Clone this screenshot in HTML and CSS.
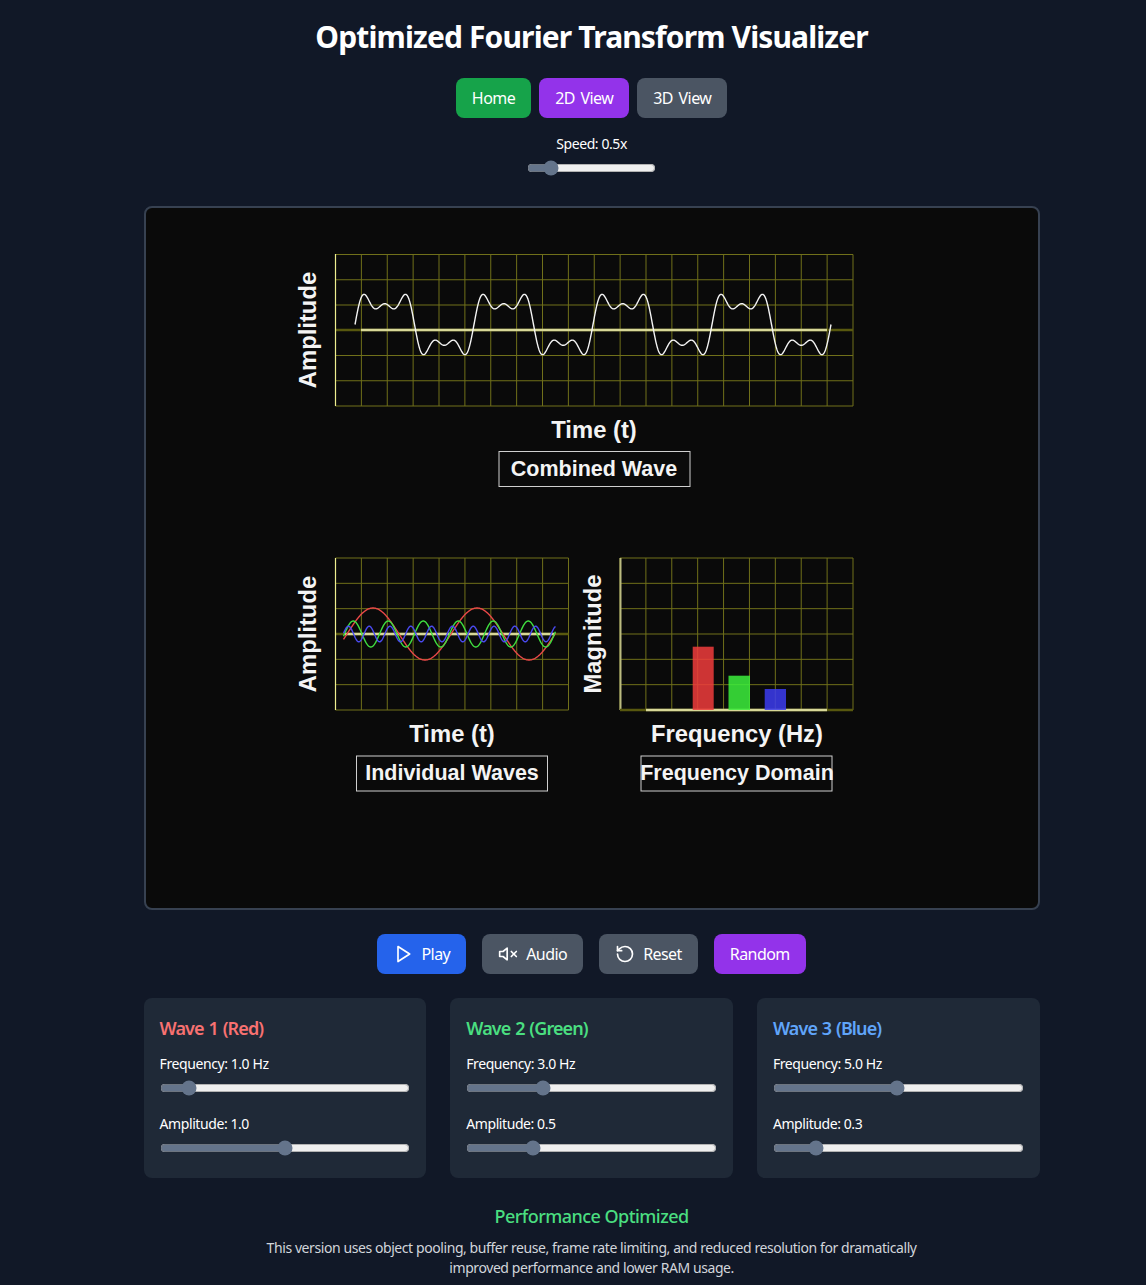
FILE: index.html
```html
<!DOCTYPE html>
<html lang="en">
<head>
    <meta charset="UTF-8">
    <meta name="viewport" content="width=device-width, initial-scale=1.0">
    <title>Optimized Fourier Transform Visualizer</title>
    <link rel="stylesheet" href="styles.css">
</head>
<body>
    <div class="app">
        <h1 class="title">Optimized Fourier Transform Visualizer</h1>

        <!-- Page nav -->
        <div class="button-row nav-row">
            <button class="btn btn-green">Home</button>
            <button class="btn btn-purple">2D View</button>
            <button class="btn btn-gray">3D View</button>
        </div>

        <div class="speed">
            <label>Speed: 0.5x</label>
            <input class="speed-slider" type="range" min="0.1" max="3" step="0.1" value="0.5">
        </div>

        <!-- Plots -->
        <div class="stage">
            <svg class="stage-svg" viewBox="146 208 892 700" width="892" height="700">
                <g id="plots"></g>

                <text class="axis-label" text-anchor="middle" transform="translate(316 330) rotate(-90)">Amplitude</text>
                <text class="axis-label" text-anchor="middle" x="594" y="438">Time (t)</text>
                <rect class="title-box" x="499" y="451.5" width="191" height="35"></rect>
                <text class="plot-title" text-anchor="middle" x="594" y="476">Combined Wave</text>

                <text class="axis-label" text-anchor="middle" transform="translate(316 634) rotate(-90)">Amplitude</text>
                <text class="axis-label" text-anchor="middle" x="452" y="742">Time (t)</text>
                <rect class="title-box" x="356.5" y="756" width="191" height="35"></rect>
                <text class="plot-title" text-anchor="middle" x="452" y="780">Individual Waves</text>

                <text class="axis-label" text-anchor="middle" transform="translate(601 634) rotate(-90)">Magnitude</text>
                <text class="axis-label" text-anchor="middle" x="737" y="742">Frequency (Hz)</text>
                <rect class="title-box" x="641" y="756" width="191" height="35"></rect>
                <text class="plot-title" text-anchor="middle" x="737" y="780">Frequency Domain</text>
            </svg>
        </div>

        <!-- Playback controls -->
        <div class="button-row action-row">
            <button class="btn btn-blue">
                <svg class="icon" viewBox="0 0 24 24"><polygon points="6 3 20 12 6 21 6 3"></polygon></svg>
                Play
            </button>
            <button class="btn btn-gray">
                <svg class="icon" viewBox="0 0 24 24"><path d="M11 5 6 9H2v6h4l5 4z"></path><line x1="22" y1="9" x2="16" y2="15"></line><line x1="16" y1="9" x2="22" y2="15"></line></svg>
                Audio
            </button>
            <button class="btn btn-gray">
                <svg class="icon" viewBox="0 0 24 24"><path d="M3 12a9 9 0 1 0 9-9 9.75 9.75 0 0 0-6.74 2.74L3 8"></path><path d="M3 3v5h5"></path></svg>
                Reset
            </button>
            <button class="btn btn-purple">Random</button>
        </div>

        <!-- Wave settings -->
        <div class="wave-grid">
            <div class="wave-card">
                <h3 class="wave-title red">Wave 1 (Red)</h3>
                <label class="control-label">Frequency: 1.0 Hz</label>
                <input class="slider" type="range" min="0.1" max="10" step="0.1" value="1">
                <label class="control-label">Amplitude: 1.0</label>
                <input class="slider" type="range" min="0" max="2" step="0.1" value="1">
            </div>
            <div class="wave-card">
                <h3 class="wave-title green">Wave 2 (Green)</h3>
                <label class="control-label">Frequency: 3.0 Hz</label>
                <input class="slider" type="range" min="0.1" max="10" step="0.1" value="3">
                <label class="control-label">Amplitude: 0.5</label>
                <input class="slider" type="range" min="0" max="2" step="0.1" value="0.5">
            </div>
            <div class="wave-card">
                <h3 class="wave-title blue">Wave 3 (Blue)</h3>
                <label class="control-label">Frequency: 5.0 Hz</label>
                <input class="slider" type="range" min="0.1" max="10" step="0.1" value="5">
                <label class="control-label">Amplitude: 0.3</label>
                <input class="slider" type="range" min="0" max="2" step="0.1" value="0.3">
            </div>
        </div>

        <div class="footer">
            <h3 class="footer-title">Performance Optimized</h3>
            <p class="footer-text">This version uses object pooling, buffer reuse, frame rate limiting, and reduced resolution for dramatically improved performance and lower RAM usage.</p>
        </div>
    </div>

    <script src="script.js"></script>
</body>
</html>
```

FILE: styles.css
```css
* {
    margin: 0;
    padding: 0;
    box-sizing: border-box;
}

body {
    font-family: "Noto Sans", sans-serif;
    background-color: #111827;
    color: white;
}

.app {
    width: 896px;
    margin-left: 143.6px;
    padding-top: 19px;
}

.title {
    font-size: 30px;
    line-height: 36px;
    font-weight: 700;
    letter-spacing: -0.029em;
    text-align: center;
    margin-bottom: 23px;
}

/* Buttons */
.button-row {
    display: flex;
    justify-content: center;
}

.nav-row {
    gap: 8px;
    margin-bottom: 16px;
}

.action-row {
    gap: 16px;
    margin-bottom: 24px;
}

.btn {
    display: flex;
    align-items: center;
    gap: 8px;
    height: 40px;
    padding: 0 16px;
    border: none;
    border-radius: 8px;
    color: white;
    font-family: inherit;
    font-size: 16px;
    letter-spacing: -0.035em;
    word-spacing: 2px;
}

.btn-green { background-color: #16a34a; }
.btn-purple { background-color: #9333ea; }
.btn-gray { background-color: #4b5563; }
.btn-blue { background-color: #2563eb; }

.icon {
    width: 20px;
    height: 20px;
    fill: none;
    stroke: white;
    stroke-width: 2;
    stroke-linecap: round;
    stroke-linejoin: round;
}

/* Speed */
.speed {
    display: flex;
    flex-direction: column;
    align-items: center;
    gap: 6px;
    font-size: 14px;
    line-height: 20px;
    letter-spacing: -0.03em;
    margin-bottom: 30px;
}

.speed-slider {
    display: block;
    width: 129px;
    height: 16px;
    accent-color: #64748b;
}

/* Canvas area */
.stage {
    height: 704px;
    border: 2px solid #374151;
    border-radius: 8px;
    background-color: #0a0a0a;
    overflow: hidden;
    margin-bottom: 24px;
}

.stage-svg {
    display: block;
}

.axis-label {
    font-family: "Liberation Sans", sans-serif;
    font-size: 23.8px;
    font-weight: 700;
    fill: #f4f4f4;
}

.plot-title {
    font-family: "Liberation Sans", sans-serif;
    font-size: 21.5px;
    font-weight: 700;
    fill: #f4f4f4;
}

.title-box {
    fill: none;
    stroke: #cfcfcf;
    stroke-width: 1;
}

/* Wave cards */
.wave-grid {
    display: grid;
    grid-template-columns: repeat(3, 1fr);
    gap: 24px;
    margin-bottom: 24px;
}

.wave-card {
    background-color: #1f2937;
    border-radius: 8px;
    padding: 16px 16px 22px;
}

.wave-title {
    font-size: 18px;
    line-height: 28px;
    font-weight: 600;
    letter-spacing: -0.05em;
    word-spacing: 1px;
    margin-bottom: 12px;
}

.red { color: #f87171; }
.green { color: #4ade80; }
.blue { color: #60a5fa; }

.control-label {
    display: block;
    font-size: 14px;
    line-height: 20px;
    letter-spacing: -0.03em;
}

.slider {
    display: block;
    width: 100%;
    height: 16px;
    margin: 6px 0 18px;
    accent-color: #64748b;
}

.slider:last-child {
    margin-bottom: 0;
}

/* Footer */
.footer {
    text-align: center;
}

.footer-title {
    font-size: 18px;
    line-height: 28px;
    font-weight: 500;
    letter-spacing: -0.03em;
    color: #4ade80;
    margin-bottom: 8px;
}

.footer-text {
    width: 672px;
    margin: 0 auto;
    font-size: 14px;
    line-height: 20px;
    letter-spacing: -0.03em;
    color: #d1d5db;
}
```

FILE: script.js
```js
const SVG_NS = 'http://www.w3.org/2000/svg';
const plots = document.getElementById('plots');
const GRID = '#70701a';
const AXIS_DIM = '#58580f';
const AXIS = '#d8d898';

function add(tag, attrs) {
    const el = document.createElementNS(SVG_NS, tag);
    for (const key in attrs) el.setAttribute(key, attrs[key]);
    plots.appendChild(el);
    return el;
}

function line(x1, y1, x2, y2, stroke, width) {
    add('line', { x1, y1, x2, y2, stroke, 'stroke-width': width });
}

function drawGrid(x, y, cols, rows, w, h) {
    for (let i = 0; i <= cols; i++) {
        const gx = x + (w * i) / cols;
        line(gx, y, gx, y + h, GRID, 1);
    }
    for (let i = 0; i <= rows; i++) {
        const gy = y + (h * i) / rows;
        line(x, gy, x + w, gy, GRID, 1);
    }
}

function drawWave(x1, x2, fn, stroke, width) {
    let d = '';
    for (let x = x1; x <= x2; x += 0.5) {
        d += `${d ? 'L' : 'M'}${x} ${fn(x).toFixed(2)}`;
    }
    add('path', { d, fill: 'none', stroke, 'stroke-width': width, 'stroke-linejoin': 'round' });
}

// combined wave
drawGrid(335.5, 254.5, 20, 6, 517.5, 151.5);
line(335.5, 330, 853, 330, AXIS_DIM, 2.5);
line(361, 330, 827, 330, AXIS, 2.5);
line(335.5, 254, 335.5, 406, '#eeee90', 1.2);
drawWave(355, 831, (x) => {
    const t = ((x - 355) / 119) * Math.PI * 2;
    return 324.5 - 26 * (Math.sin(t) + 0.5 * Math.sin(3 * t) + 0.3 * Math.sin(5 * t));
}, '#f4f4f4', 1.4);

// individual waves
drawGrid(335.5, 558, 9, 6, 233, 152);
line(335.5, 634, 568.5, 634, AXIS_DIM, 2.5);
line(345, 634, 555, 634, AXIS, 2.5);
line(335.5, 558, 335.5, 710, '#eeee90', 1.2);
drawWave(343.5, 555.5, (x) => 634 - 26 * Math.sin(((x - 347) / 104) * Math.PI * 2), '#e84848', 1.4);
drawWave(343.5, 555.5, (x) => 634 - 13 * Math.sin(((x - 344.5) / 35) * Math.PI * 2), '#40e040', 1.4);
drawWave(343.5, 555.5, (x) => 634 - 7.8 * Math.sin(((x - 343.2) / 20.8) * Math.PI * 2), '#4a4af0', 1.4);

// frequency bars
drawGrid(620, 558, 9, 6, 233, 152);
line(620.5, 558, 620.5, 710, '#bcbc80', 2);
line(620, 710, 853, 710, AXIS_DIM, 2.5);
line(646, 710, 827, 710, AXIS, 2.5);
add('rect', { x: 692.7, y: 646.7, width: 21, height: 63.3, fill: 'rgba(240,60,60,0.85)' });
add('rect', { x: 728.5, y: 675.7, width: 21.5, height: 34.3, fill: 'rgba(60,240,60,0.85)' });
add('rect', { x: 764.7, y: 689, width: 21.3, height: 21, fill: 'rgba(60,60,240,0.85)' });
```
